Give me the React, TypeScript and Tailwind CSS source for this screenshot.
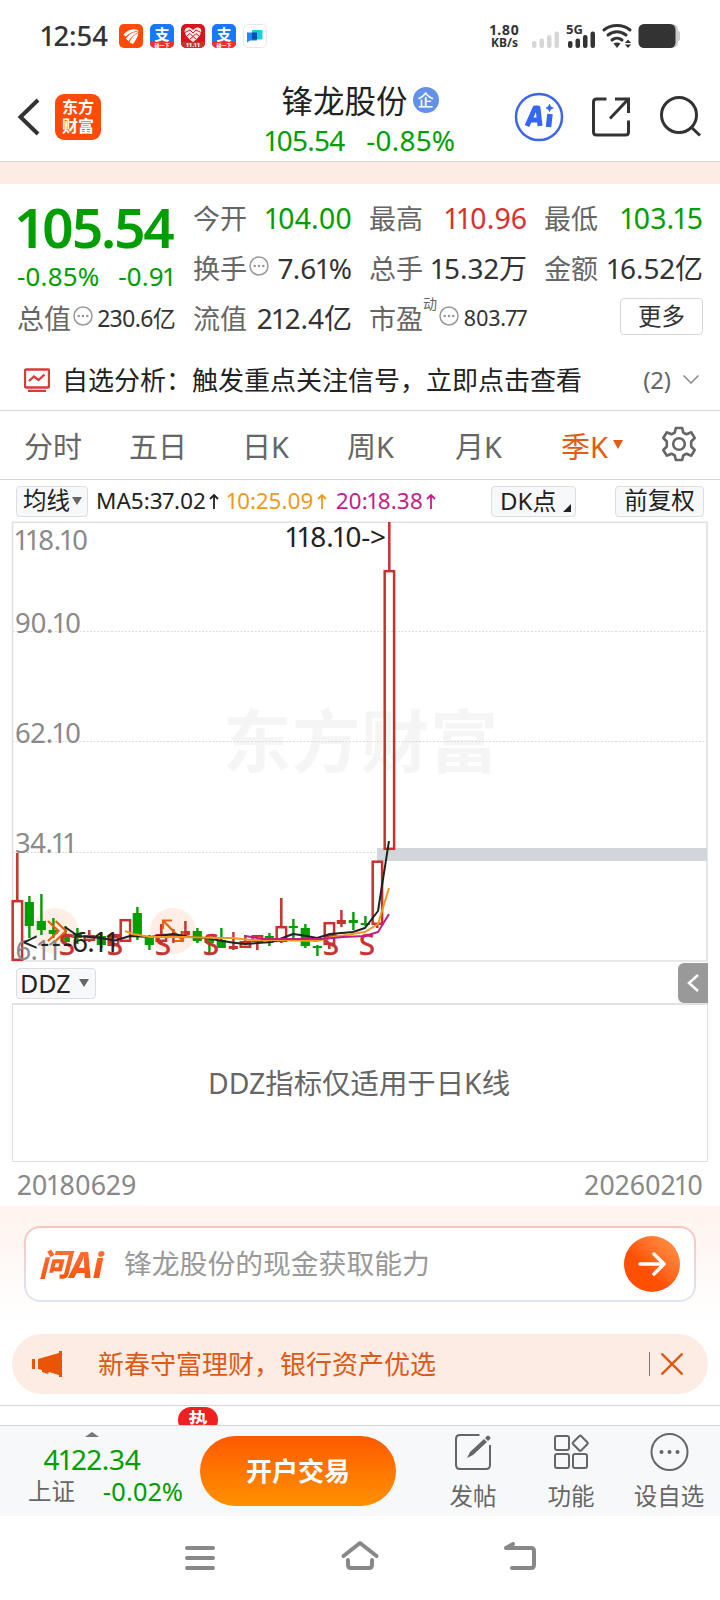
import type { ReactNode } from "react";

const GREEN = "#009e00";
const RED = "#c9302f";

type Candle = { x: number; hi: number; lo: number; top: number; bottom: number; kind: "up" | "down" | "upSolid" };

const candles: Candle[] = [
  { x: 17.3, hi: 853, lo: 961, top: 900, bottom: 961, kind: "up" },
  { x: 29.3, hi: 896, lo: 938, top: 902, bottom: 926, kind: "down" },
  { x: 41.3, hi: 894, lo: 935, top: 921, bottom: 930, kind: "down" },
  { x: 53.3, hi: 918, lo: 938, top: 930, bottom: 934, kind: "down" },
  { x: 65.3, hi: 926, lo: 946, top: 936, bottom: 942, kind: "down" },
  { x: 77.3, hi: 928, lo: 944, top: 933, bottom: 938, kind: "down" },
  { x: 89.3, hi: 930, lo: 942, top: 935, bottom: 941, kind: "up" },
  { x: 101.3, hi: 932, lo: 948, top: 936, bottom: 945, kind: "down" },
  { x: 113.3, hi: 934, lo: 947, top: 936, bottom: 946, kind: "up" },
  { x: 125.3, hi: 919, lo: 942, top: 919, bottom: 942, kind: "up" },
  { x: 137.3, hi: 907, lo: 940, top: 913, bottom: 935, kind: "down" },
  { x: 149.3, hi: 935, lo: 950, top: 938, bottom: 945, kind: "down" },
  { x: 161.3, hi: 924, lo: 945, top: 934, bottom: 942, kind: "up" },
  { x: 173.3, hi: 929, lo: 943, top: 934, bottom: 938, kind: "upSolid" },
  { x: 185.3, hi: 921, lo: 936, top: 931, bottom: 935, kind: "upSolid" },
  { x: 197.3, hi: 928, lo: 943, top: 931, bottom: 941, kind: "down" },
  { x: 209.3, hi: 938, lo: 955, top: 940, bottom: 943, kind: "down" },
  { x: 221.3, hi: 928, lo: 948, top: 940, bottom: 948, kind: "down" },
  { x: 233.3, hi: 932, lo: 950, top: 946, bottom: 949, kind: "upSolid" },
  { x: 245.3, hi: 935, lo: 948, top: 941, bottom: 948, kind: "up" },
  { x: 257.3, hi: 935, lo: 950, top: 935, bottom: 942, kind: "up" },
  { x: 269.3, hi: 933, lo: 946, top: 936, bottom: 940, kind: "down" },
  { x: 281.3, hi: 898, lo: 943, top: 926, bottom: 942, kind: "up" },
  { x: 293.3, hi: 919, lo: 941, top: 926, bottom: 928, kind: "down" },
  { x: 305.3, hi: 924, lo: 948, top: 928, bottom: 946, kind: "down" },
  { x: 317.3, hi: 945, lo: 956, top: 946, bottom: 948, kind: "down" },
  { x: 329.3, hi: 922, lo: 949, top: 922, bottom: 945, kind: "up" },
  { x: 341.3, hi: 910, lo: 927, top: 920, bottom: 924, kind: "upSolid" },
  { x: 353.3, hi: 912, lo: 930, top: 920, bottom: 923, kind: "down" },
  { x: 365.3, hi: 916, lo: 926, top: 923, bottom: 925, kind: "down" },
  { x: 377.3, hi: 860.5, lo: 928, top: 860.5, bottom: 925, kind: "up" },
  { x: 389.3, hi: 522, lo: 850, top: 570, bottom: 850, kind: "up" },
];

function CandleShape({ c }: { c: Candle }) {
  if (c.kind === "up") {
    return (
      <g stroke={RED} strokeWidth="2.5" fill="none">
        <path d={`M${c.x} ${c.hi}V${c.top}M${c.x} ${c.bottom}V${c.lo}`} />
        <rect x={c.x - 4.6} y={c.top + 1.2} width="9.4" height={c.bottom - c.top - 2.4} />
      </g>
    );
  }
  const fill = c.kind === "down" ? GREEN : RED;
  return (
    <g fill={fill}>
      <rect x={c.x - 1.1} y={c.hi} width="2.4" height={c.lo - c.hi} />
      <rect x={c.x - 4.6} y={c.top} width="9.2" height={c.bottom - c.top} />
    </g>
  );
}

function KChart() {
  return (
    <svg viewBox="0 521 720 442" className="block h-[442px] w-[720px] proportional-nums" fontFamily="'Noto Sans','Noto Sans CJK SC',sans-serif">
      <text x="223" y="767" fontSize="68" fontWeight="700" fill="#f5f5f5" textLength="275">东方财富</text>
      <g stroke="#dcdcdc" strokeWidth="1" strokeDasharray="2 1.5">
        <path d="M13 631.5H707M13 741.5H707M13 852.5H707" />
      </g>
      <path d="M12.5 961V522.3H707V961H12.5" fill="none" stroke="#dfe1e2" strokeWidth="1.6" />
      <circle cx="55.5" cy="931" r="23" fill="#feeee6" />
      <circle cx="173" cy="931" r="23" fill="#feeee6" />
      <rect x="377" y="848" width="330" height="13" fill="#d2d5da" />
      {candles.map((c) => (
        <CandleShape key={c.x} c={c} />
      ))}
      <g fill="#8a8a8a" fontSize="27.5">
        <text x="15" y="549.5" textLength="73">118.10</text>
        <text x="15" y="633" textLength="66">90.10</text>
        <text x="15" y="743" textLength="66">62.10</text>
        <text x="15" y="852.5" textLength="61">34.11</text>
        <text x="15.5" y="959.5" textLength="45">6.11</text>
      </g>
      <g fill="none" stroke="#e0640f" strokeWidth="2.2">
        <path d="M48 921L58.500 931L48 941M55.500 921L66 931L55.500 941" />
        <path d="M172 920.500H163V929M163 920.500L182.500 940.500M183 931V941H174" />
      </g>
      <g fill={RED} stroke={RED} strokeWidth="0.6" fontSize="29" textAnchor="middle">
        {[67, 115, 163, 211, 331, 367].map((x) => (
          <text key={x} x={x} y="955">S</text>
        ))}
      </g>
      <g fill="none" strokeWidth="2" strokeLinejoin="round">
        <path stroke="#222" d="M65 927L78 936L101 938L115 940.500L130 936L150 937L173 934L190 937L205 938L217 940L232 942.500L245 944L272 942L293 934L304 935.500L317 938L330 934L353 932L365 928L378 911L389 841" />
        <path stroke="#ef9a1c" d="M125 931L133 934L150 937L183 937L220 938L233 938L250 940L280 940L317 941L333 937L365 932L378 924L389 888" />
        <path stroke="#c41d8b" d="M245 936L263 939L323 939L343 937L365 936L378 932L389 914" />
      </g>
      <g fill="#222" fontSize="28">
        <text x="286" y="547" textLength="100">118.10-&gt;</text>
        <text y="952"><tspan x="22" textLength="50">&lt;---</tspan><tspan x="72" textLength="46">6.11</tspan></text>
      </g>
    </svg>
  );
}

function Dots() {
  return (
    <svg viewBox="0 0 20 20" className="-mt-1 ml-[2px] h-5 w-5 shrink-0" fill="none">
      <circle cx="10" cy="10" r="9" stroke="#999" strokeWidth="1.5" />
      <g fill="#999">
        <circle cx="5.700" cy="10" r="1.300" />
        <circle cx="10" cy="10" r="1.300" />
        <circle cx="14.300" cy="10" r="1.300" />
      </g>
    </svg>
  );
}

function Stat({ label, value, cls, extra }: { label: string; value: string; cls: string; extra?: ReactNode }) {
  return (
    <div className="flex h-[50px] items-center justify-between whitespace-nowrap">
      <div className="flex items-center">
        <span className="text-[27px] text-[#666]">{label}</span>
        {extra}
      </div>
      <span className={cls}>{value}</span>
    </div>
  );
}

function StatusBar() {
  return (
    <div className="flex h-[72px] items-center pl-[41px]">
      <span className="w-[68px] text-[27.500px] font-medium text-[#333]">12:54</span>
      <div className="ml-[10px] flex items-center gap-[7px]">
        <svg viewBox="0 0 24 24" className="h-6 w-6">
          <rect width="24" height="24" rx="5" fill="#ff4a08" />
          <path d="M4.500 10.500C8 6 14 3.500 20 6.500C15 7 10 9 6.500 12.500ZM7 14.500C10 10 15 7.500 20 7.500C16 10 12 13 9.500 17ZM10.500 18.500C12 14 16 10 19.500 9C19 13 16 17 14 20Z" fill="#fff" />
        </svg>
        <AlipayIcon />
        <svg viewBox="0 0 24 24" className="h-6 w-6">
          <rect width="24" height="24" rx="5" fill="#d8141c" />
          <path d="M0 18H24V19A5 5 0 0 1 19 24H5A5 5 0 0 1 0 19Z" fill="#c3372b" />
          <path d="M12 18C2 11 2 4 7 3.500C10 3.500 12 6 12 6C12 6 14 3.500 17 3.500C22 4 22 11 12 18Z" fill="#ffe9e9" />
          <path d="M4 8.500L9 6L12 9L15 6L20 8.500M6 12L9 9.500L12 12.500L15 9.500L18 12M9 15L12 12.500L15 15" fill="none" stroke="#d8141c" strokeWidth="1" />
          <text x="12" y="22.500" fontSize="6" fontWeight="700" textAnchor="middle" fill="#fff">11.11</text>
        </svg>
        <AlipayIcon />
        <svg viewBox="0 0 24 24" className="h-6 w-6">
          <rect x="0.500" y="0.500" width="23" height="23" rx="5" fill="#fff" stroke="#e6e6e6" />
          <rect x="9" y="6" width="10.500" height="9.500" rx="1" fill="#10d4dc" />
          <path d="M4 8.500H14V16.500H7L4 18.500Z" fill="#2487f8" />
          <rect x="9" y="8.500" width="5" height="7" fill="#0a4fb0" />
        </svg>
      </div>
      <div className="ml-[222px] flex w-[31px] flex-col items-center text-[#333]">
        <span className="text-[14px] font-bold leading-[13px] tracking-[0.4px]">1.80</span>
        <span className="text-[12px] font-bold leading-[14px]">KB/s</span>
      </div>
      <svg viewBox="530 22 152 28" className="ml-[10px] h-7 w-[152px]" fill="#333">
        <g fill="#d6d6d6">
          <rect x="532" y="41" width="4.500" height="7" rx="2" />
          <rect x="539.500" y="38.500" width="4.500" height="9.500" rx="2" />
          <rect x="547" y="35" width="4.500" height="13" rx="2" />
          <rect x="554.500" y="31.500" width="4.500" height="16.500" rx="2" />
        </g>
        <text x="566" y="34" fontSize="13" fontWeight="700">5G</text>
        <rect x="568" y="41" width="4.500" height="7" rx="2" />
        <rect x="575.500" y="38.500" width="4.500" height="9.500" rx="2" />
        <rect x="583" y="35" width="4.500" height="13" rx="2" />
        <rect x="590.500" y="31.500" width="4.500" height="16.500" rx="2" />
        <g fill="none" stroke="#333" strokeWidth="3" strokeLinecap="round">
          <path d="M604 30C611 24 623 24 630 30" />
          <path d="M608 35C613.500 30.500 620.500 30.500 626 35" />
          <path d="M612 40C615 37.500 619 37.500 622 40" />
        </g>
        <path d="M613.500 43.500Q617 41.500 620.500 43.500L617 48Z" />
        <path d="M628 39.500L631.200 43H624.800ZM628 48L631.200 44.500H624.800Z" />
        <rect x="676" y="31" width="4" height="10" rx="2" fill="#ccc" />
        <rect x="640" y="24" width="38" height="24" rx="5.500" fill="#ccc" />
        <rect x="638.500" y="24" width="37" height="24" rx="5.500" />
      </svg>
    </div>
  );
}

function AlipayIcon() {
  return (
    <svg viewBox="0 0 24 24" className="h-6 w-6" fontFamily="'Noto Sans CJK SC',sans-serif">
      <rect width="24" height="24" rx="5" fill="#1677ff" />
      <path d="M0 17.500Q12 15.500 24 17.500V19A5 5 0 0 1 19 24H5A5 5 0 0 1 0 19Z" fill="#f0302b" />
      <text x="12" y="15.500" fontSize="15" fontWeight="700" textAnchor="middle" fill="#fff">支</text>
      <text x="12" y="22.500" fontSize="5" fontWeight="700" textAnchor="middle" fill="#fff">碰一下</text>
    </svg>
  );
}

function Header() {
  return (
    <div className="flex h-[90px] items-start border-b border-[#d5d5d5]">
      <svg viewBox="0 0 40 40" className="ml-[9px] mt-[25px] h-10 w-10" fill="none" stroke="#333" strokeWidth="4">
        <path d="M29 3L11.500 20L29 37" />
      </svg>
      <div className="ml-[6px] mt-[22px] flex h-[46px] w-[46px] flex-col items-center justify-center rounded-[9px] bg-[#ff4a08] text-[16px] font-bold leading-[19px] text-white">
        <span>东方</span>
        <span>财富</span>
      </div>
      <div className="ml-[153px] mt-[11px] flex w-[212px] flex-col items-center">
        <div className="flex h-[35px] items-center gap-[5px]">
          <span className="text-[31.500px] text-[#222]">锋龙股份</span>
          <span className="-mt-px flex h-[26px] w-[26px] items-center justify-center rounded-full bg-[#6390e8] text-[16px] font-medium text-white">企</span>
        </div>
        <div className="mt-[3px] flex h-[38px] w-[190px] items-center justify-between text-[28px] text-[#009e00]">
          <span className="tracking-[-0.800px]">105.54</span>
          <span>-0.85%</span>
        </div>
      </div>
      <svg viewBox="510 84 200 66" className="ml-[44px] mt-3 h-[66px] w-[200px]" fill="none" stroke="#333" strokeWidth="3">
        <circle cx="539" cy="117" r="23" stroke="#3b66ea" strokeWidth="2.500" />
        <path d="M527 126L535 108H538L540 126M531 120H540" stroke="#3566f5" strokeWidth="5" strokeLinejoin="round" />
        <path d="M550 114L548.500 127" stroke="#3566f5" strokeWidth="5.500" />
        <path d="M549.500 103.500L551 106.500L554 108L551 109.500L549.500 112L548 109.500L545.500 108L548 106.500Z" fill="#3566f5" stroke="none" />
        <path d="M606.500 99H596.500Q593.500 99 593.500 102V132Q593.500 135 596.500 135H625.500Q628.500 135 628.500 132V120.500M615 99H628.500V113M628 99.500L610 118.500" />
        <circle cx="679" cy="115" r="17.500" />
        <path d="M690.500 126.500L700 135.500" />
      </svg>
    </div>
  );
}

function Tabs() {
  return (
    <div className="flex h-[69px] items-center border-b border-[#d5d5d5] pt-[3px] text-[29px] whitespace-nowrap text-[#666]">
      <span className="ml-6 w-[105px]">分时</span>
      <span className="w-[113px]">五日</span>
      <span className="w-[105px]">日K</span>
      <span className="w-[108px]">周K</span>
      <span className="w-[106px]">月K</span>
      <span className="flex w-[98px] items-center gap-[5px] text-[#e35a10]">
        季K
        <svg viewBox="0 0 10 9" className="-mt-1 h-[9px] w-[10px]"><path d="M0 0H10L5 9Z" fill="#e35a10" /></svg>
      </span>
      <svg viewBox="0 0 40 40" className="-mt-[5px] h-10 w-10" fill="none" stroke="#666" strokeWidth="2.600" strokeLinejoin="round">
        <path d="M16.800 4H23.200L24.200 8.500L27.500 10.300L32.300 8.300L35.700 14L32.200 17.500V22.500L35.700 26L32.300 31.700L27.500 29.700L24.200 31.500L23.200 36H16.800L15.800 31.500L12.500 29.700L7.700 31.700L4.300 26L7.800 22.500V17.500L4.300 14L7.700 8.300L12.500 10.300L15.800 8.500Z" />
        <circle cx="20" cy="20" r="5.800" />
      </svg>
    </div>
  );
}

const chip = "flex items-center rounded-[4px] border border-[#dadde1] bg-[#f7f8fa] text-[#222]";

function MaRow() {
  return (
    <div className="flex h-[41px] items-center whitespace-nowrap pl-4 pt-px text-[22.500px]">
      <div className={`${chip} h-[31px] w-[72px] pl-[6px] text-[23.500px]`}>
        均线
        <svg viewBox="0 0 10 8" className="ml-[2px] h-2 w-[10px]"><path d="M0 0H10L5 8Z" fill="#666" /></svg>
      </div>
      <span className="ml-2 w-[111px] text-[#222]">MA5:37.02</span>
      <Up color="#222" />
      <span className="ml-[8px] w-[88px] text-[#ef9a1c]">10:25.09</span>
      <Up color="#ef9a1c" />
      <span className="ml-[9px] w-[88px] text-[#c41d8b]">20:18.38</span>
      <Up color="#c41d8b" />
      <div className={`${chip} ml-auto h-[31px] w-[85px] justify-between pl-2 pr-1 text-[24px]`}>
        DK点
        <svg viewBox="0 0 8 8" className="mt-[14px] h-2 w-2"><path d="M8 0V8H0Z" fill="#222" /></svg>
      </div>
      <div className={`${chip} ml-[39px] mr-4 h-[31px] w-[89px] justify-center text-[23.500px]`}>前复权</div>
    </div>
  );
}

function Up({ color }: { color: string }) {
  return (
    <svg viewBox="0 0 12 18" className="h-[18px] w-3" fill="none" stroke={color} strokeWidth="1.800">
      <path d="M7 17V3M3 7L7 3L11 7" />
    </svg>
  );
}

function AskAi() {
  return (
    <div className="h-[128px] bg-linear-to-b from-[#fff3ee] to-white to-90% px-6 pt-5">
      <div className="h-[76px] rounded-[16px] bg-linear-to-b from-[#f7c4ba] to-[#dfe5f5] p-[2px]">
        <div className="flex h-[72px] items-center rounded-[14px] bg-white pl-[13px] pr-[14px]">
          <span className="flex w-[72px] items-center bg-linear-to-t from-[#ff5000] to-[#ff7038] bg-clip-text text-[31px] font-black italic text-transparent">
            问<span className="text-[35px] font-extrabold">Ai</span>
          </span>
          <span className="ml-[13px] text-[27.800px] text-[#999]">锋龙股份的现金获取能力</span>
          <div className="ml-auto flex h-14 w-14 items-center justify-center rounded-full bg-linear-to-tr from-[#ff5000] from-40% to-[#ff9a4a]">
            <svg viewBox="0 0 30 26" className="h-[26px] w-[30px]" fill="none" stroke="#fff" strokeWidth="3.500" strokeLinecap="round" strokeLinejoin="round">
              <path d="M3 13H27M17 3L27 13L17 23" />
            </svg>
          </div>
        </div>
      </div>
    </div>
  );
}

function Banner() {
  return (
    <div className="mx-3 flex h-[60px] items-center rounded-full bg-[#fcece3] text-[26px] text-[#dc5a16]">
      <svg viewBox="0 0 30 26" className="ml-5 h-[26px] w-[30px]" fill="#e95504">
        <path d="M0 8H3V18H0ZM6 8L27 2V0H30V26H27V24L17 21L16 23L10 21V19L6 18Z" />
      </svg>
      <span className="ml-9">新春守富理财，银行资产优选</span>
      <span className="ml-auto h-6 w-px bg-[#c8641e]" />
      <svg viewBox="0 0 22 22" className="ml-[11px] mr-[25px] h-[22px] w-[22px]" fill="none" stroke="#dc5a16" strokeWidth="2.400">
        <path d="M0.500 0.500L21.500 21.500M21.500 0.500L0.500 21.500" />
      </svg>
    </div>
  );
}

function Action({ label, children }: { label: string; children: ReactNode }) {
  return (
    <div className="flex w-[98px] flex-col items-center">
      <svg viewBox="0 0 40 40" className="mt-[6px] h-10 w-10" fill="none" stroke="#666" strokeWidth="2">
        {children}
      </svg>
      <span className="mt-[13px] text-[23.500px] whitespace-nowrap text-[#666]">{label}</span>
    </div>
  );
}

function BottomBar() {
  return (
    <div className="flex h-[91px] items-start border-t border-[#d5d5d5] bg-[#f7f8fa]">
      <div className="ml-[28px] flex w-[155px] flex-col">
        <svg viewBox="0 0 14 5" className="ml-[57px] mt-[6px] h-[5px] w-[14px]"><path d="M0 5L7 0L14 5Z" fill="#777" /></svg>
        <span className="mt-[8px] w-[128px] text-center text-[28px] tracking-[-0.300px] text-[#009e00]">4122.34</span>
        <div className="mt-[6px] flex items-center justify-between">
          <span className="text-[23.500px] text-[#666]">上证</span>
          <span className="text-[25.500px] text-[#009e00]">-0.02%</span>
        </div>
      </div>
      <button className="ml-[17px] mt-[10px] h-[70px] w-[196px] rounded-full bg-linear-to-b from-[#ff5800] to-[#ff9000] text-[26px] font-bold text-white">开户交易</button>
      <div className="ml-[28px] flex">
        <Action label="发帖">
          <path d="M26.500 3H7Q3 3 3 7V33Q3 37 7 37H33Q37 37 37 33V13" />
          <path d="M14 26L17 20L31 7L34 10L20 23ZM32 6L34 4Q35 3 36 4L37 5Q38 6 37 7L35 9Z" fill="#666" stroke="none" />
        </Action>
        <Action label="功能">
          <rect x="4" y="4" width="14" height="14" rx="2" />
          <rect x="4" y="22" width="14" height="14" rx="2" />
          <rect x="22" y="22" width="14" height="14" rx="2" />
          <rect x="23.500" y="5.500" width="11.500" height="11.500" rx="1.500" transform="rotate(45 29.250 11.250)" />
        </Action>
        <Action label="设自选">
          <circle cx="20.500" cy="20" r="18" />
          <g fill="#666" stroke="none">
            <circle cx="12.500" cy="20" r="2" />
            <circle cx="20.500" cy="20" r="2" />
            <circle cx="28.500" cy="20" r="2" />
          </g>
        </Action>
      </div>
    </div>
  );
}

export default function App() {
  return (
    <div className="h-[1600px] w-[720px] overflow-hidden bg-white font-['Noto_Sans','Noto_Sans_CJK_SC',sans-serif] leading-none proportional-nums">
      <StatusBar />
      <Header />
      <div className="h-[22px] bg-[#fcece3]" />

      <div className="flex h-[168px] pl-[17px] pt-[9px]">
        <div className="w-[158px]">
          <div className="flex h-[66px] items-center text-[55px] font-semibold tracking-[-2.4px] whitespace-nowrap text-[#009e00]">105.54</div>
          <div className="flex h-[34px] items-center justify-between text-[26px] text-[#009e00]">
            <span>-0.85%</span>
            <span>-0.91</span>
          </div>
          <Stat label="总值" extra={<Dots />} value="230.6亿" cls="text-[23px] tracking-[-0.700px] text-[#333]" />
        </div>
        <div className="ml-[18px] w-[159px]">
          <Stat label="今开" value="104.00" cls="text-[28.500px] text-[#009e00]" />
          <Stat label="换手" extra={<Dots />} value="7.61%" cls="text-[28px] text-[#333]" />
          <Stat label="流值" value="212.4亿" cls="text-[28px] text-[#333]" />
        </div>
        <div className="ml-[17px] w-[158px]">
          <Stat label="最高" value="110.96" cls="text-[28.500px] text-[#d93030]" />
          <Stat label="总手" value="15.32万" cls="text-[28px] text-[#333]" />
          <Stat
            label="市盈"
            extra={
              <>
                <span className="-mt-7 text-[14px] text-[#666]">动</span>
                <Dots />
              </>
            }
            value="803.77"
            cls="text-[21.500px] tracking-[-0.300px] text-[#333]"
          />
        </div>
        <div className="ml-[17px] w-[159px]">
          <Stat label="最低" value="103.15" cls="text-[28.500px] text-[#009e00]" />
          <Stat label="金额" value="16.52亿" cls="text-[28px] text-[#333]" />
          <div className="ml-auto mt-[5px] flex h-[37px] w-[83px] items-center justify-center rounded-[4px] border border-[#d8d8d8] text-[23.500px] text-[#333]">更多</div>
        </div>
      </div>

      <div className="flex h-[59px] items-center border-b border-[#d5d5d5] pb-[3px] whitespace-nowrap">
        <svg viewBox="0 0 26 24" className="ml-6 h-6 w-[26px]" fill="none" stroke="#d93a3a" strokeWidth="2.300">
          <rect x="1" y="1.500" width="24" height="18" rx="1" />
          <path d="M5 13L10 8.500L14.500 12L20.500 6.500M4 23H22" />
        </svg>
        <span className="ml-[12px] w-[130px] text-[26px] text-[#222]">自选分析：</span>
        <span className="text-[26px] text-[#222]">触发重点关注信号，立即点击查看</span>
        <span className="ml-auto text-[24px] text-[#666]">(2)</span>
        <svg viewBox="0 0 16 9" className="ml-[12px] mr-[21px] h-[9px] w-4" fill="none" stroke="#888" strokeWidth="1.500">
          <path d="M0.500 0.500L8 8L15.500 0.500" />
        </svg>
      </div>

      <Tabs />
      <MaRow />
      <KChart />

      <div className="flex h-10 items-center justify-between pl-4 pr-3">
        <div className={`${chip} h-[31px] w-20 gap-[8px] pl-[3px] text-[25px]`}>
          DDZ
          <svg viewBox="0 0 10 8" className="h-2 w-[10px]"><path d="M0 0H10L5 8Z" fill="#666" /></svg>
        </div>
        <div className="flex h-10 w-[30px] items-center justify-center rounded-l-[6px] bg-[#999]">
          <svg viewBox="0 0 12 18" className="h-[18px] w-3" fill="none" stroke="#fff" strokeWidth="2.500"><path d="M11 1L2 9L11 17" /></svg>
        </div>
      </div>
      <div className="mx-3 flex h-[159px] items-center justify-center border border-t-2 border-[#dfe1e2] pr-[2px] pt-px text-[28.400px] text-[#666]">DDZ指标仅适用于日K线</div>
      <div className="flex h-[44px] items-center justify-between px-[17px] pt-[2px] text-[26.800px] text-[#888]">
        <span>20180629</span>
        <span>20260210</span>
      </div>

      <AskAi />
      <Banner />
      <div className="mt-[11px] h-[20px] overflow-hidden border-t border-[#d5d5d5] pl-[178px] pt-px">
        <div className="flex h-[26px] w-10 justify-center rounded-[13px] bg-[#ef2020] pt-[4px] text-[19px] font-bold text-white">热</div>
      </div>
      <BottomBar />

      <svg viewBox="0 1516 720 84" className="block h-[84px] w-[720px]" fill="none" stroke="#888" strokeWidth="4" strokeLinecap="round" strokeLinejoin="round">
        <path d="M187 1548H213M187 1558H213M187 1568H213" />
        <path d="M343.500 1556L360 1543L376.500 1556M348 1560V1565Q348 1568 351 1568H369Q372 1568 372 1565V1560" />
        <path d="M513 1544L506 1548H531Q534 1548 534 1551V1565Q534 1568 531 1568H512" />
      </svg>
    </div>
  );
}
